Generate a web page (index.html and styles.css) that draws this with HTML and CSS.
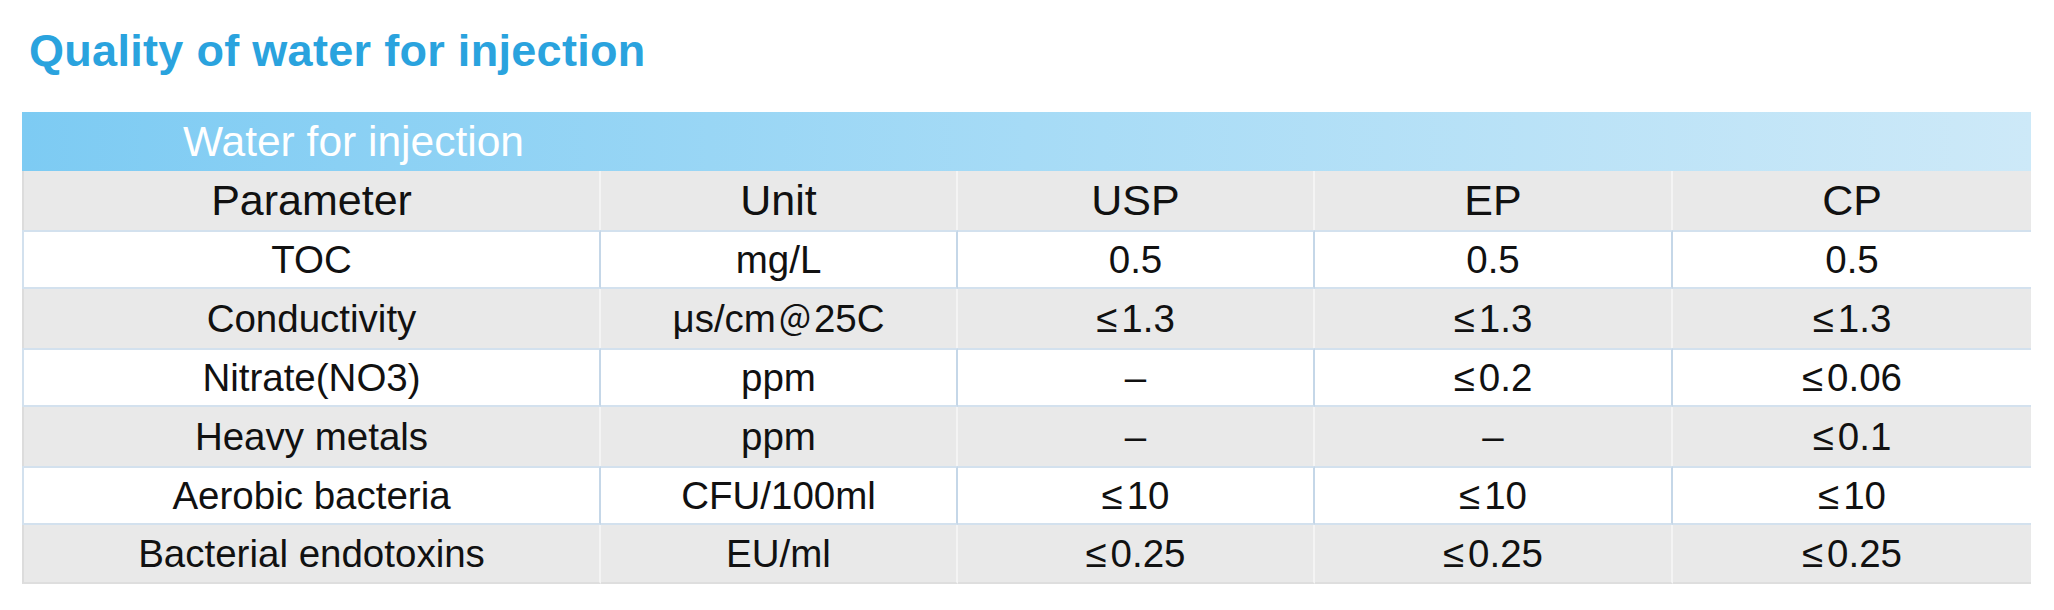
FILE: index.html
```html
<!DOCTYPE html>
<html lang="en">
<head>
<meta charset="utf-8">
<title>Quality of water for injection</title>
<link rel="stylesheet" href="styles.css">
</head>
<body>
<h1 class="title">Quality of water for injection</h1>
<div class="tbl">
  <div class="band">Water for injection</div>

  <div class="cell gray head">Parameter</div>
  <div class="cell gray head">Unit</div>
  <div class="cell gray head">USP</div>
  <div class="cell gray head">EP</div>
  <div class="cell gray head last">CP</div>

  <div class="cell white">TOC</div>
  <div class="cell white">mg/L</div>
  <div class="cell white">0.5</div>
  <div class="cell white">0.5</div>
  <div class="cell white last">0.5</div>

  <div class="cell gray">Conductivity</div>
  <div class="cell gray">μs/cm<span class="at">＠</span>25C</div>
  <div class="cell gray"><span class="le">≤</span>1.3</div>
  <div class="cell gray"><span class="le">≤</span>1.3</div>
  <div class="cell gray last"><span class="le">≤</span>1.3</div>

  <div class="cell white">Nitrate(NO3)</div>
  <div class="cell white">ppm</div>
  <div class="cell white">–</div>
  <div class="cell white"><span class="le">≤</span>0.2</div>
  <div class="cell white last"><span class="le">≤</span>0.06</div>

  <div class="cell gray">Heavy metals</div>
  <div class="cell gray">ppm</div>
  <div class="cell gray">–</div>
  <div class="cell gray">–</div>
  <div class="cell gray last"><span class="le">≤</span>0.1</div>

  <div class="cell white">Aerobic bacteria</div>
  <div class="cell white">CFU/100ml</div>
  <div class="cell white"><span class="le">≤</span>10</div>
  <div class="cell white"><span class="le">≤</span>10</div>
  <div class="cell white last"><span class="le">≤</span>10</div>

  <div class="cell gray bottom">Bacterial endotoxins</div>
  <div class="cell gray bottom">EU/ml</div>
  <div class="cell gray bottom"><span class="le">≤</span>0.25</div>
  <div class="cell gray bottom"><span class="le">≤</span>0.25</div>
  <div class="cell gray bottom last"><span class="le">≤</span>0.25</div>
</div>
</body>
</html>
```

FILE: styles.css
```css
html, body {
  margin: 0;
  padding: 0;
  background: #ffffff;
}

body {
  font-family: "Liberation Sans", Arial, "Noto Sans CJK SC", sans-serif;
  color: #111111;
}

.title {
  margin: 0;
  padding: 25px 0 0 29px;
  height: 52px;
  font-size: 45px;
  line-height: 52px;
  font-weight: bold;
  color: #2aa3de;
  letter-spacing: 0.3px;
}

.tbl {
  margin: 35px 0 0 22px;
  width: 2009px;
  display: grid;
  grid-template-columns: 579px 357px 357px 358px 358px;
  grid-auto-rows: 59px;
}

.band {
  grid-column: 1 / -1;
  height: 60px;
  box-sizing: border-box;
  padding-left: 161px;
  display: flex;
  align-items: center;
  font-size: 42.5px;
  color: #ffffff;
  background: linear-gradient(to right, #7dcbf3 0%, #a6dbf6 50%, #cde9f8 100%);
}

.cell {
  box-sizing: border-box;
  display: flex;
  align-items: center;
  justify-content: center;
  font-size: 38.5px;
  white-space: nowrap;
}

.head {
  font-size: 43px;
}

.gray {
  background: #e9e9e9;
  border-right: 2px solid #f4f4f4;
}

.white {
  background: #ffffff;
  border-top: 2px solid #d3e1ee;
  border-bottom: 2px solid #d3e1ee;
  border-right: 2px solid #c5d7e8;
}

.tbl > .cell:nth-child(5n+2) {
  border-left: 2px solid #dcdcdc;
}

.tbl > .white:nth-child(5n+2) {
  border-left: 2px solid #d3e1ee;
}

.last {
  border-right: 0;
}

.bottom {
  border-bottom: 2px solid #dedede;
}

.le {
  margin-right: 4px;
}

.at {
  font-family: "Noto Sans CJK SC", sans-serif;
  font-size: 34px;
  margin: 0 2px;
}
```
